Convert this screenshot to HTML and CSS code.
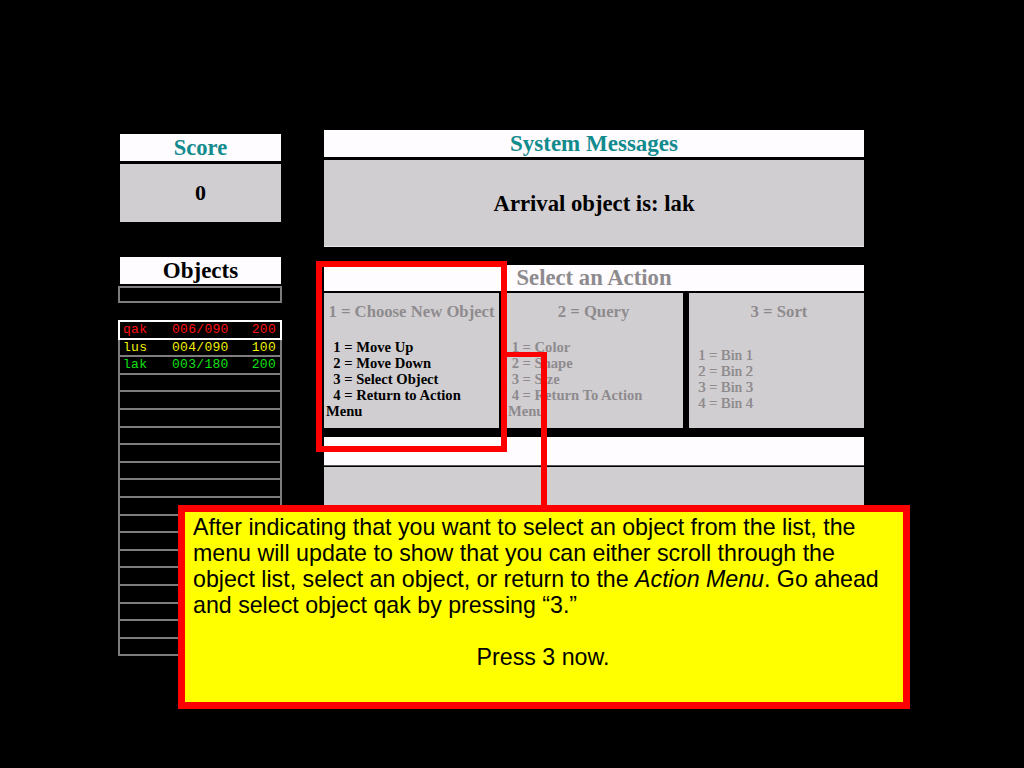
FILE: index.html
```html
<!DOCTYPE html>
<html>
<head>
<meta charset="utf-8">
<link rel="stylesheet" href="styles.css">
</head>
<body>
<div class="stage">
  <div class="leftcol">
    <div class="hdr teal scorehdr">Score</div>
    <div class="scorebox">0</div>
    <div class="hdr objhdr">Objects</div>
    <div class="blackslot"></div>
    <div class="objlist">
      <div class="row sel red"><span class="nm">qak</span><span class="pos">006/090</span><span class="val">200</span></div>
      <div class="row yellow"><span class="nm">lus</span><span class="pos">004/090</span><span class="val">100</span></div>
      <div class="row green"><span class="nm">lak</span><span class="pos">003/180</span><span class="val">200</span></div>
      <div class="row"></div><div class="row"></div><div class="row"></div><div class="row"></div>
      <div class="row"></div><div class="row"></div><div class="row"></div><div class="row"></div>
      <div class="row"></div><div class="row"></div><div class="row"></div><div class="row"></div>
      <div class="row"></div><div class="row"></div><div class="row"></div><div class="row"></div>
    </div>
  </div>
  <div class="rightcol">
    <div class="hdr teal">System Messages</div>
    <div class="msgbox">Arrival object is: lak</div>
    <div class="hdr grey actionhdr">Select an Action</div>
    <div class="menus">
      <div class="menu m1">
        <div class="mtitle">1 = Choose New Object</div>
        <div class="items active">&nbsp;&nbsp;1 = Move Up<br>&nbsp;&nbsp;2 = Move Down<br>&nbsp;&nbsp;3 = Select Object<br>&nbsp;&nbsp;4 = Return to Action<br>Menu</div>
      </div>
      <div class="menu m2">
        <div class="mtitle">2 = Query</div>
        <div class="items">&nbsp;1 = Color<br>&nbsp;2 = Shape<br>&nbsp;3 = Size<br>&nbsp;4 = Return To Action<br>Menu</div>
      </div>
      <div class="menu m3">
        <div class="mtitle">3 = Sort</div>
        <div class="items sortitems">1 = Bin 1<br>2 = Bin 2<br>3 = Bin 3<br>4 = Bin 4</div>
      </div>
    </div>
    <div class="whitestrip"></div>
    <div class="graystrip"></div>
  </div>
</div>
<div class="hilite"></div>
<div class="conn-h"></div>
<div class="conn-v"></div>
<div class="callout">
  <p>After indicating that you want to select an object from the list, the menu will update to show that you can either scroll through the object list, select an object, or return to the <em>Action Menu</em>. Go ahead and select object qak by pressing “3.”</p>
  <p class="press">Press 3 now.</p>
</div>
</body>
</html>
```
FILE: styles.css
```css
html, body {
  margin: 0;
  padding: 0;
  background: #000;
}
body {
  width: 1024px;
  height: 768px;
  position: relative;
  overflow: hidden;
  font-family: "Liberation Serif", "Times New Roman", serif;
  font-weight: bold;
}
.stage {
  display: flex;
  align-items: flex-start;
  padding-left: 118px;
}
.leftcol {
  width: 164px;
  margin-top: 134px;
  display: flex;
  flex-direction: column;
}
.rightcol {
  width: 540px;
  margin-left: 42px;
  margin-top: 130px;
  display: flex;
  flex-direction: column;
}
.hdr {
  background: #fefcfe;
  height: 27px;
  line-height: 27px;
  text-align: center;
  font-size: 23px;
  color: #000;
}
.leftcol .hdr {
  margin: 0 1px 0 2px;
}
.scorehdr { font-size: 22.5px; }
.teal { color: #128b8e; }
.grey { color: #8e8b8e; }
.scorebox {
  margin: 3px 1px 0 2px;
  height: 58px;
  line-height: 58px;
  background: #d1ced1;
  text-align: center;
  font-size: 22px;
}
.objhdr {
  margin-top: 35px !important;
}
.blackslot {
  margin-top: 2px;
  height: 13px;
  border: 2px solid #7d7d7d;
  background: #000;
}
.objlist {
  margin-top: 17px;
  background: #7d7d7d;
  padding: 2px;
  display: grid;
  grid-template-rows: repeat(19, 15.6px);
  row-gap: 2px;
}
.row {
  background: #000;
  position: relative;
  display: flex;
  align-items: center;
  font-family: "Liberation Mono", "DejaVu Sans Mono", monospace;
  font-weight: normal;
  font-size: 13px;
  letter-spacing: 0.3px;
}
.row.sel {
  box-shadow: 0 0 0 2px #ffffff;
}
.red { color: #ff1010; }
.yellow { color: #f0f000; }
.green { color: #10e010; }
.nm { width: 49px; padding-left: 3px; }
.pos { width: 78px; padding-left: 0; }
.val { flex: 1; text-align: right; padding-right: 4px; }
.msgbox {
  margin-top: 3px;
  height: 86px;
  background: #d1ced1;
  border-bottom: 1px solid #e8e8e8;
  text-align: center;
  line-height: 88px;
  font-size: 22.7px;
}
.actionhdr {
  margin-top: 18px;
  height: 26px;
  line-height: 26px;
  font-size: 22.7px;
}
.menus {
  margin-top: 2px;
  display: flex;
  height: 135px;
}
.menu {
  background: #d1ced1;
  height: 135px;
  box-sizing: border-box;
}
.m1 { width: 175px; padding-left: 2px; margin-right: 4px; }
.m2 { width: 180px; padding-left: 5px; margin-right: 6px; }
.m3 { width: 175px; padding-left: 9px; }
.mtitle {
  color: #8e8b8e;
  font-size: 16.7px;
  text-align: center;
  margin-top: 9px;
  height: 19px;
  line-height: 19px;
  padding-right: 4px;
}
.m1 .mtitle { margin-left: -2px; padding-right: 0; }
.items {
  margin-top: 18px;
  font-size: 14.6px;
  line-height: 16px;
  color: #8e8b8e;
}
.items.active { color: #000; }
.sortitems {
  margin-top: 26px;
  font-weight: normal;
  text-shadow: 0.4px 0 0 #8e8b8e;
}
.whitestrip {
  margin-top: 9px;
  height: 28px;
  background: #fefcfe;
  border-bottom: 1px solid #555;
}
.graystrip {
  margin-top: 1px;
  height: 60px;
  background: #d1ced1;
}
.hilite {
  position: absolute;
  left: 316px;
  top: 261px;
  width: 179px;
  height: 179px;
  border: 6px solid #ff0000;
}
.conn-h {
  position: absolute;
  left: 506px;
  top: 352px;
  width: 41px;
  height: 5px;
  background: #ff0000;
}
.conn-v {
  position: absolute;
  left: 541px;
  top: 352px;
  width: 6px;
  height: 156px;
  background: #ff0000;
}
.callout {
  position: absolute;
  left: 178px;
  top: 505px;
  width: 700px;
  height: 188px;
  border: 7px solid #ff0000;
  background: #ffff00;
  font-family: "Liberation Sans", Arial, sans-serif;
  font-weight: normal;
  font-size: 23.2px;
  line-height: 26px;
  color: #000;
  padding: 2px 10px 0 8px;
}
.callout p {
  margin: 0;
}
.callout .press {
  margin-top: 26px;
  text-align: center;
}
```
